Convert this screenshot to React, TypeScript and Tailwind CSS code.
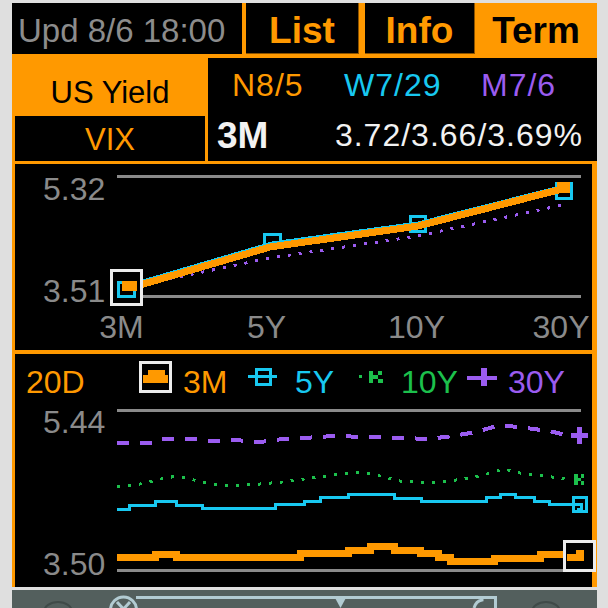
import React from "react";

const OR = "#ff9900";
const CY = "#18c8f0";
const PU = "#9b5cf0";
const GR = "#1cc04c";
const GY = "#8a8a8a";

function Chart1() {
  const xl = [
    { t: "3M", x: 121.5 },
    { t: "5Y", x: 266.5 },
    { t: "10Y", x: 416.5 },
    { t: "30Y", x: 561 },
  ];
  return (
    <svg width={577} height={186} viewBox="15 164 577 186" className="block" shapeRendering="crispEdges">
      <rect x={117} y={175} width={464} height={3} fill={GY} />
      <rect x={117} y={295} width={464} height={3} fill={GY} />
      <text x={43} y={200} fontSize={32} fill={GY}>5.32</text>
      <text x={43} y={302} fontSize={32} fill={GY}>3.51</text>
      {xl.map((l) => (
        <text key={l.t} x={l.x} y={338} fontSize={32} fill={GY} textAnchor="middle">
          {l.t}
        </text>
      ))}

      {/* month ago */}
      <polyline points="126,288 270,258 418,236 567,204" fill="none" stroke={PU} strokeWidth={3} strokeDasharray="3 8" />
      {/* week ago */}
      <polyline points="126,286 272,243 418,223 564,186" fill="none" stroke={CY} strokeWidth={3} />
      <rect x={264.5} y={234.5} width={16} height={12} fill="none" stroke={CY} strokeWidth={3} />
      <rect x={410.5} y={216.5} width={15} height={15} fill="none" stroke={CY} strokeWidth={3} />
      <rect x={556.5} y={183.5} width={15} height={15} fill="none" stroke={CY} strokeWidth={3} />
      {/* now */}
      <polyline points="140,285 270,247 418,226 566,188" fill="none" stroke={OR} strokeWidth={7} />
      <rect x={557} y={182} width={13} height={11} fill={OR} />

      {/* cursor on 3M */}
      <rect x={111.5} y={270.5} width={30} height={34} fill="#000" stroke="#ececec" strokeWidth={3} />
      <rect x={118.5} y={282.5} width={16} height={14} fill="none" stroke={CY} strokeWidth={3} />
      <rect x={122} y={281} width={15} height={10} fill={OR} />
    </svg>
  );
}

function Chart2() {
  const orange =
    "M117 557.5 H155 V554 H176 V557.5 H300 V553.5 H348 V550.5 H370 V546.5 H394 V550.5 H420 V553.5 H438 V557 H450 V561 H494 V558 H540 V554 H566";
  const cyan =
    "M117 509 H129 V505.5 H155 V501.5 H176 V505 H202 V508.5 H275 V504 H304 V501.5 H320 V497.5 H348 V494.5 H394 V498.5 H421 V501.5 H486 V497.5 H500 V494.5 H515 V497.5 H534 V501.5 H549 V504.5 H581 V509 H577";
  const purple =
    "117,443 150,443 161,439 198,439 208,441 235,440 260,442 283,439 304,438 333,436 403,438 428,439 453,436 476,432 500,425 526,428 549,431 566,435";
  const green =
    "117,487 140,484 165,478 178,476 190,479 210,484 230,486 260,484 282,482 304,479 334,475 360,472 380,476 400,481 430,483 450,481 480,476 504,469 520,473 545,476 566,479";

  return (
    <svg width={577} height={233} viewBox="15 354 577 233" className="block overflow-visible" shapeRendering="crispEdges">
      {/* legend */}
      <text x={26} y={393} fontSize={32} fill={OR}>20D</text>
      <rect x={140.5} y={362.5} width={30} height={29} fill="#000" stroke="#ececec" strokeWidth={3} />
      <rect x={143} y={375} width={25} height={8} fill={OR} />
      <rect x={148} y={370} width={17} height={5} fill={OR} />
      <text x={183} y={393} fontSize={32} fill={OR}>3M</text>

      <rect x={248} y={375} width={29} height={3} fill={CY} />
      <rect x={256.5} y={369.5} width={14} height={15} fill="none" stroke={CY} strokeWidth={3} />
      <text x={295} y={393} fontSize={32} fill={CY}>5Y</text>

      <rect x={359} y={375} width={3} height={3} fill={GR} />
      <rect x={369} y={371} width={4} height={12} fill={GR} />
      <rect x={373} y={375} width={5} height={4} fill={GR} />
      <rect x={378} y={371} width={4} height={4} fill={GR} />
      <rect x={378} y={379} width={5} height={4} fill={GR} />
      <text x={401} y={393} fontSize={32} fill={GR}>10Y</text>

      <rect x={467} y={376} width={30} height={4} fill={PU} />
      <rect x={481} y={368} width={6} height={18} fill={PU} />
      <text x={508} y={393} fontSize={32} fill={PU}>30Y</text>

      {/* grid */}
      <rect x={117} y={409} width={464} height={3} fill={GY} />
      <rect x={117} y={569} width={464} height={3} fill={GY} />
      <text x={43} y={433} fontSize={32} fill={GY}>5.44</text>
      <text x={43} y={575} fontSize={32} fill={GY}>3.50</text>

      {/* 30Y */}
      <polyline points={purple} fill="none" stroke={PU} strokeWidth={4} strokeDasharray="12 11" />
      <rect x={571} y={433} width={17} height={5} fill={PU} />
      <rect x={577} y={427} width={5} height={17} fill={PU} />

      {/* 10Y */}
      <polyline points={green} fill="none" stroke={GR} strokeWidth={3} strokeDasharray="3 8" />
      <rect x={574} y={474} width={4} height={11} fill={GR} />
      <rect x={578} y={478} width={3} height={3} fill={GR} />
      <rect x={581} y={474} width={3} height={4} fill={GR} />
      <rect x={581} y={481} width={3} height={4} fill={GR} />

      {/* 5Y */}
      <path d={cyan} fill="none" stroke={CY} strokeWidth={3} />
      <rect x={573.5} y={497.5} width={13} height={14} fill="none" stroke={CY} strokeWidth={3} />

      {/* 3M */}
      <path d={orange} fill="none" stroke={OR} strokeWidth={7} />
      <rect x={564.5} y={541.5} width={30} height={29} fill="#000" stroke="#ececec" strokeWidth={3} />
      <rect x={567} y={554} width={17} height={7} fill={OR} />
      <rect x={576} y={550} width={8} height={4} fill={OR} />
    </svg>
  );
}

function BottomBar() {
  const c = "#b2cbd2";
  return (
    <div className="mt-[3px] h-[18px] w-[585px] bg-[#535f5d]">
      <svg width={585} height={18} viewBox="0 0 585 18" className="block">
        <ellipse cx={46} cy={22} rx={14} ry={10} fill="none" stroke="#3f4a48" strokeWidth={2} />
        <ellipse cx={534} cy={22} rx={14} ry={10} fill="none" stroke="#3f4a48" strokeWidth={2} />
        <circle cx={111.5} cy={20} r={13} fill="none" stroke={c} strokeWidth={3} />
        <path d="M105 12 L111.5 19 L118 12" fill="none" stroke={c} strokeWidth={3} />
        <path d="M124 7.5 H483.5 V18" fill="none" stroke={c} strokeWidth={3} />
        <polygon points="322,6 335,6 328.5,18" fill={c} />
        <path d="M462 18 Q464 11 470 10 V6" fill="none" stroke={c} strokeWidth={3} />
      </svg>
    </div>
  );
}

export default function App() {
  return (
    <div className="h-[608px] w-[608px] overflow-hidden bg-[#dfdfdf] pl-[12px] pt-[3px] font-['Liberation_Sans',Arial,sans-serif]">
      <div className="flex w-[585px] flex-col bg-[#ff9900]">
        {/* Header */}
        <div className="flex h-[55px] pb-[4px]">
          <div className="flex w-[230px] items-center bg-black pl-[6px] pt-[4px] text-[33px] leading-none text-[#8c8c8c]">
            Upd 8/6 18:00
          </div>
          <div className="ml-[4px] flex w-[113px] items-center justify-center border-b border-r border-[#8a5200] bg-black pt-[4px] text-[37px] font-bold leading-none text-[#ff9900]">
            List
          </div>
          <div className="ml-[6px] flex w-[110px] items-center justify-center border-b border-r border-[#8a5200] bg-black pt-[4px] text-[37px] font-bold leading-none text-[#ff9900]">
            Info
          </div>
          <div className="flex flex-1 items-center justify-center pt-[4px] text-[37px] font-bold leading-none text-black">
            Term
          </div>
        </div>

        {/* Market + quote */}
        <div className="flex h-[103px]">
          <div className="flex w-[196px] flex-col">
            <div className="flex h-[58px] items-center justify-center pt-[10px] text-[31px] leading-none text-black">
              US Yield
            </div>
            <div className="ml-[3px] flex h-[45px] w-[190px] items-center justify-center bg-black pt-[2px] text-[31px] leading-none text-[#ff9900]">
              VIX
            </div>
          </div>
          <div className="flex-1 bg-black pt-[11px]">
            <div className="flex h-[32px] items-center pl-[24px] text-[32px] leading-none tracking-[1px]">
              <span className="w-[112px] text-[#ff9900]">N8/5</span>
              <span className="w-[137px] text-[#18c8f0]">W7/29</span>
              <span className="text-[#9b5cf0]">M7/6</span>
            </div>
            <div className="mt-[14px] flex h-[40px] items-center justify-between pl-[9px] pr-[14px] leading-none text-[#f2f2f2]">
              <span className="text-[37px] font-bold">3M</span>
              <span className="text-[32px] tracking-[1px]">3.72/3.66/3.69%</span>
            </div>
          </div>
        </div>

        {/* Term structure */}
        <div className="ml-[3px] mt-[3px] h-[186px] w-[577px] bg-black">
          <Chart1 />
        </div>

        {/* 20 day history */}
        <div className="ml-[3px] mt-[4px] h-[233px] w-[577px] bg-black">
          <Chart2 />
        </div>
      </div>
      <BottomBar />
    </div>
  );
}
